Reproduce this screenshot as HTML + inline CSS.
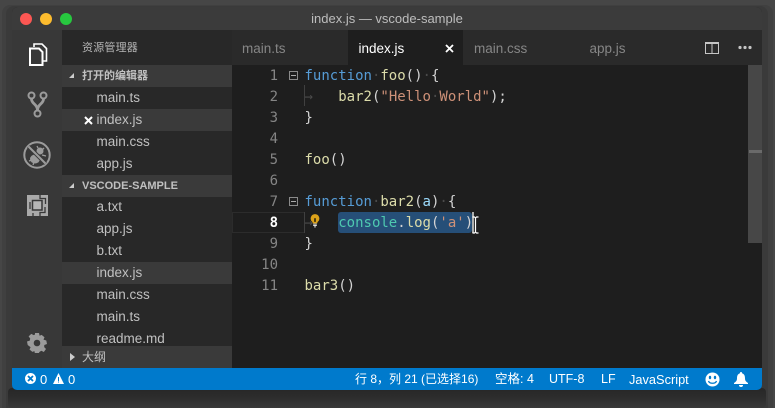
<!DOCTYPE html>
<html><head><meta charset="utf-8">
<style>
html,body{margin:0;padding:0;background:#464646;}
#p{position:relative;width:775px;height:408px;overflow:hidden;background:#464646;font-family:"Liberation Sans","Noto Sans CJK SC",sans-serif;}
.a{position:absolute;}
.shadow{left:2px;top:5px;width:771px;height:403px;background:#404040;border-radius:8px 8px 0 0;}
.shadow2{left:6px;top:6px;width:762px;height:402px;background:#3a3a3a;border-radius:8px 8px 0 0;}
.bot{left:8px;top:388px;width:758px;height:20px;background:linear-gradient(#272727,#2c2c2c 45%,#393939);border-radius:4px;}
.win{left:12px;top:7px;width:750px;height:383px;border-radius:6px;overflow:hidden;background:#1e1e1e;}
.title{left:12px;top:7px;width:750px;height:23px;background:#3b3b3b;border-radius:6px 6px 0 0;text-align:center;color:#bdbdbd;font-size:13px;line-height:24px;}
.dot{width:12px;height:12px;border-radius:50%;top:13px;}
.act{left:12px;top:30px;width:50px;height:338px;background:#383838;}
.side{left:62px;top:30px;width:170px;height:338px;background:#282828;}
.tabs{left:232px;top:30px;width:530px;height:35px;background:#2a2a2a;}
.tabt{top:30px;height:35px;line-height:37px;font-size:13.500px;color:#868686;white-space:nowrap;}
.sb{left:62px;width:170px;color:#c0c0c0;font-size:13.500px;white-space:nowrap;}
.row{height:22px;line-height:22px;padding-left:34.500px;width:135.500px;}
.hd{height:22px;line-height:22px;background:#3a3a3a;font-weight:bold;font-size:11px;color:#c0c0c0;padding-left:20px;width:150px;}
.tri{left:69px;width:0;height:0;}
.ed{left:232px;top:65px;width:516px;height:303px;background:#1e1e1e;}
.ln{left:232px;width:46px;margin-top:1px;text-align:right;color:#858585;font:14px/21px "DejaVu Sans Mono",monospace;height:21px;}
.cd{left:304.500px;margin-top:1px;font:14px/21px "DejaVu Sans Mono",monospace;color:#d4d4d4;height:21px;white-space:pre;}
.k{color:#569cd6}.f{color:#dcdcaa}.s{color:#ce9178}.v{color:#9cdcfe}.w{color:#4a4a4a}
.fold{left:289px;width:9px;height:9px;border:1px solid #8a8a8a;box-sizing:border-box;}
.fold:after{content:"";position:absolute;left:1px;top:3px;width:5px;height:1px;background:#aaa;}
.st{top:368px;height:22px;line-height:23px;color:#fff;font-size:13px;white-space:nowrap;}
</style></head><body><div id="p">
<div class="a shadow"></div>
<div class="a shadow2"></div>
<div class="a bot"></div>
<div class="a win"></div>
<div class="a title">index.js — vscode-sample</div>
<div class="a dot" style="left:20px;background:#fc5753"></div>
<div class="a dot" style="left:40px;background:#fdbc2e"></div>
<div class="a dot" style="left:60px;background:#27c83f"></div>
<div class="a act"></div>
<svg class="a" style="left:28px;top:42px" width="20" height="25" viewBox="0 0 20 25" fill="none" stroke="#fff"><path d="M2 6.500h9l3.500 3.500V23H2z" stroke-width="2"/><path d="M6 5V2h8l4.500 4.500V19h-3" stroke-width="1.600"/></svg>
<svg class="a" style="left:27px;top:91px" width="21" height="27" viewBox="0 0 21 27" fill="none" stroke="#9b9b9b"><circle cx="4.500" cy="4.500" r="3" stroke-width="2"/><circle cx="16.500" cy="4.500" r="3" stroke-width="2"/><circle cx="10.500" cy="22.500" r="3" stroke-width="2"/><path d="M4.500 8c0 5 6 5 6 11.500M16.500 8c0 5-6 5-6 11.500" stroke-width="2.800"/></svg>
<svg class="a" style="left:23px;top:141px" width="28" height="28" viewBox="0 0 28 28" fill="none" stroke="#9b9b9b"><circle cx="14" cy="14" r="12.700" stroke-width="2"/><ellipse cx="12" cy="18" rx="5" ry="4.500" fill="#9b9b9b" stroke="none"/><circle cx="17" cy="10" r="3.500" fill="#9b9b9b" stroke="none"/><path d="M14 5l1 2M21 7l-2 2M23 15l-4-1M20 21l-3-3M6 20l3-1M10 24l1-3" stroke-width="1.300"/><path d="M5.500 5.500l17 17" stroke="#383838" stroke-width="4"/><path d="M5.500 5.500l17 17" stroke-width="2"/></svg>
<svg class="a" style="left:27px;top:195px" width="21" height="21" viewBox="0 0 21 21"><path d="M0 0h21v21H0z" fill="#a9a9a9"/><path d="M5.500 5.500h9.500v9.500H5.500z" fill="#b5b5b5" stroke="#383838" stroke-width="1.500"/><path d="M13 0v3.500h5.500v5.500M18 12v5.500h-5V21M6 21v-3M3 7v7" fill="none" stroke="#383838" stroke-width="1.300"/></svg>
<svg class="a" style="left:27px;top:333px" width="20" height="20" viewBox="0 0 20 20"><path d="M8 0h4l.6 2.800 2-.9 2.900 2.400-1 2.300 2.800.9.700 3.500-2.700 1-.1 2.100 1.800 1.900-2.200 3-2.500-1.200-2.100 1.300-.2 1.800H8l-.6-2.800-2 .8-2.900-2.400 1.100-2.300L.7 12 0 8.500l2.800-.9.400-2.100L1.600 3.400 4.300.9l2.400 1.200L8 1.500z" fill="#9b9b9b"/><circle cx="10" cy="10" r="3.300" fill="#383838"/></svg>
<div class="a side"></div>
<div class="a" style="left:82px;top:30px;height:35px;line-height:36px;font-size:11px;color:#b5b5b5;letter-spacing:.2px">资源管理器</div>
<div class="a sb hd" style="top:65px;letter-spacing:0">打开的编辑器</div>
<div class="a tri" style="top:73px;border-left:5px solid transparent;border-bottom:5px solid #ccc"></div>
<div class="a sb row" style="top:87px">main.ts</div>
<div class="a sb row" style="top:109px;background:#3a3a3a">index.js</div>
<svg class="a" style="left:84px;top:116px" width="9" height="9" viewBox="0 0 9 9"><path d="M1 1l7 7M8 1l-7 7" stroke="#fff" stroke-width="2"/></svg>
<div class="a sb row" style="top:131px">main.css</div>
<div class="a sb row" style="top:153px">app.js</div>
<div class="a sb hd" style="top:175px">VSCODE-SAMPLE</div>
<div class="a tri" style="top:183px;border-left:5px solid transparent;border-bottom:5px solid #ccc"></div>
<div class="a sb row" style="top:196px">a.txt</div>
<div class="a sb row" style="top:218px">app.js</div>
<div class="a sb row" style="top:240px">b.txt</div>
<div class="a sb row" style="top:262px;background:#3a3a3a">index.js</div>
<div class="a sb row" style="top:284px">main.css</div>
<div class="a sb row" style="top:306px">main.ts</div>
<div class="a sb row" style="top:328px">readme.md</div>
<div class="a sb hd" style="top:346px;font-weight:normal;height:22px;font-size:12px">大纲</div>
<div class="a tri" style="top:353px;left:70px;border-left:5px solid #ccc;border-top:4px solid transparent;border-bottom:4px solid transparent"></div>
<div class="a tabs"></div>
<div class="a" style="left:348px;top:30px;width:115px;height:35px;background:#1e1e1e"></div>
<div class="a tabt" style="left:242px">main.ts</div>
<div class="a tabt" style="left:358.500px;color:#fff">index.js</div>
<svg class="a" style="left:445px;top:44px" width="9" height="9" viewBox="0 0 9 9"><path d="M1 1l7 7M8 1l-7 7" stroke="#fff" stroke-width="1.800"/></svg>
<div class="a tabt" style="left:474px">main.css</div>
<div class="a tabt" style="left:589.500px">app.js</div>
<svg class="a" style="left:705px;top:42px" width="14" height="12" viewBox="0 0 14 12" fill="none" stroke="#c5c5c5"><path d="M.5 1.500h13v10H.5zM7 1.500v10"/><path d="M0 0h14v2H0z" fill="#c5c5c5" stroke="none"/></svg>
<svg class="a" style="left:738px;top:45px" width="14" height="5" viewBox="0 0 14 5" fill="#c5c5c5"><circle cx="2" cy="2.500" r="1.600"/><circle cx="7" cy="2.500" r="1.600"/><circle cx="12" cy="2.500" r="1.600"/></svg>
<div class="a ed"></div>
<div class="a" style="left:232px;top:212px;width:72px;height:21px;box-sizing:border-box;border:1px solid #2c2c2c;border-right:0"></div>
<div class="a" style="left:304px;top:85px;width:1px;height:21px;background:#404040"></div>
<div class="a" style="left:304px;top:212px;width:1px;height:21px;background:#404040"></div>
<div class="a" style="left:338px;top:212px;width:134px;height:21px;background:#264f78;border-radius:3px"></div>
<div class="a ln" style="top:65px">1</div><div class="a ln" style="top:86px">2</div><div class="a ln" style="top:107px">3</div><div class="a ln" style="top:128px">4</div><div class="a ln" style="top:149px">5</div><div class="a ln" style="top:170px">6</div><div class="a ln" style="top:191px">7</div><div class="a ln" style="top:212px;color:#fff;font-weight:bold">8</div><div class="a ln" style="top:233px">9</div><div class="a ln" style="top:254px">10</div><div class="a ln" style="top:275px">11</div>
<div class="a fold" style="top:71px"></div>
<div class="a fold" style="top:197px"></div>
<div class="a cd" style="top:65px"><span class="k">function</span><span class="w">·</span><span class="f">foo</span>()<span class="w">·</span>{</div>
<div class="a cd" style="top:86px"><span class="w">→</span>   <span class="f">bar2</span>(<span class="s">"Hello<span class="w">·</span>World"</span>);</div>
<div class="a cd" style="top:107px">}</div>
<div class="a cd" style="top:149px"><span class="f">foo</span>()</div>
<div class="a cd" style="top:191px"><span class="k">function</span><span class="w">·</span><span class="f">bar2</span>(<span class="v">a</span>)<span class="w">·</span>{</div>
<div class="a cd" style="top:212px"><span class="w">→</span>   <span style="color:#4ec9b0">console</span>.<span class="f">log</span>(<span class="s">'a'</span>)</div>
<div class="a cd" style="top:233px">}</div>
<div class="a cd" style="top:275px"><span class="f">bar3</span>()</div>
<svg class="a" style="left:310px;top:213px" width="10" height="15" viewBox="0 0 11 15"><path d="M5.500 1a4.300 4.300 0 0 0-2.700 7.600c.5.500.7 1 .7 1.600h4c0-.6.200-1.100.7-1.600A4.300 4.300 0 0 0 5.500 1z" fill="#dca21a" stroke="#dca21a"/><path d="M4.500 5h2v4h-2z" fill="#3a2f10"/><path d="M3.500 11.500h4M3.500 13h4M4.500 14.500h2" stroke="#ddd" stroke-width="1"/></svg>
<div class="a" style="left:472px;top:212px;width:2px;height:21px;background:#aeafad"></div>
<svg class="a" style="left:472px;top:216px" width="7" height="18" viewBox="0 0 7 18" fill="none" stroke="#fff" stroke-width="1.200"><path d="M.5 1h2l1 1 1-1h2M3.500 2v14M.5 17h2l1-1 1 1h2"/></svg>
<div class="a" style="left:748px;top:65px;width:14px;height:303px;background:#1e1e1e"></div>
<div class="a" style="left:748px;top:65px;width:14px;height:178px;background:#474747"></div>
<div class="a" style="left:749px;top:150px;width:13px;height:3px;background:#6a6a6a"></div>
<div class="a" style="left:12px;top:368px;width:750px;height:22px;background:#007acc;border-radius:0 0 5px 5px"></div>
<svg class="a" style="left:25px;top:373px" width="11" height="11" viewBox="0 0 11 11"><circle cx="5.500" cy="5.500" r="5.500" fill="#fff"/><path d="M3 3l5 5M8 3l-5 5" stroke="#007acc" stroke-width="1.800"/></svg>
<div class="a st" style="left:40px">0</div>
<svg class="a" style="left:53px;top:373px" width="11" height="11" viewBox="0 0 11 11"><path d="M5.500 0L11 11H0z" fill="#fff"/><path d="M5 4h1v4H5zM5 8.500h1v1H5z" fill="#007acc"/></svg>
<div class="a st" style="left:68px">0</div>
<div class="a st" style="left:355px;font-size:12px">行 8，列 21 (已选择16)</div>
<div class="a st" style="left:495px;font-size:12.500px">空格: 4</div>
<div class="a st" style="left:549px;font-size:12.500px">UTF-8</div>
<div class="a st" style="left:601px;font-size:12.500px">LF</div>
<div class="a st" style="left:629px;font-size:12.800px">JavaScript</div>
<svg class="a" style="left:705px;top:372px" width="15" height="15" viewBox="0 0 15 15"><circle cx="7.500" cy="7.500" r="7" fill="#fff"/><ellipse cx="5" cy="5.500" rx="1.200" ry="1.700" fill="#007acc"/><ellipse cx="10" cy="5.500" rx="1.200" ry="1.700" fill="#007acc"/><path d="M3.500 9c1 3 7 3 8 0" fill="none" stroke="#007acc" stroke-width="1.300"/></svg>
<svg class="a" style="left:734px;top:372px" width="14" height="15" viewBox="0 0 14 15"><path d="M7 0a1 1 0 0 1 1 1.200C10.500 2 11 4 11 6.500c0 2 1 3.300 3 4.500v1H0v-1c2-1.200 3-2.500 3-4.500C3 4 3.500 2 6 1.200A1 1 0 0 1 7 0z" fill="#fff"/><path d="M5 13h4a2 2 0 0 1-4 0z" fill="#fff"/></svg>
</div></body></html>
